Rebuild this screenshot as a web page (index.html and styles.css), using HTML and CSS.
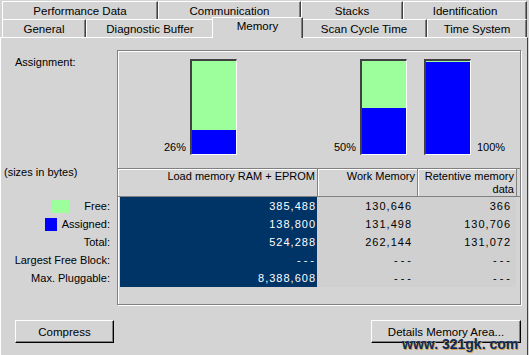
FILE: index.html
```html
<!DOCTYPE html>
<html>
<head>
    <title>Module Information - Memory</title>
    <link rel="stylesheet" href="styles.css">
</head>
<body>
    <div class="window">
        <!-- Tab strip, back row first -->
        <div class="tabs">
            <div class="tab-row row-back">
                <div class="tab">Performance Data</div>
                <div class="tab">Communication</div>
                <div class="tab">Stacks</div>
                <div class="tab">Identification</div>
            </div>
            <div class="tab-row row-front">
                <div class="tab">General</div>
                <div class="tab">Diagnostic Buffer</div>
                <div class="tab active">Memory</div>
                <div class="tab">Scan Cycle Time</div>
                <div class="tab">Time System</div>
            </div>
        </div>

        <div class="panel">
            <div class="main">
                <div class="side">
                    <div class="assign">Assignment:</div>
                    <div class="sizes">(sizes in bytes)</div>
                    <div class="row-label"><span class="swatch swatch-free"></span>Free:</div>
                    <div class="row-label"><span class="swatch swatch-used"></span>Assigned:</div>
                    <div class="row-label">Total:</div>
                    <div class="row-label">Largest Free Block:</div>
                    <div class="row-label">Max. Pluggable:</div>
                </div>

                <div class="box">
                    <div class="chart">
                        <div class="gauge gauge-load">
                            <span class="pct">26%</span>
                            <div class="bar"><div class="bar-free"></div><div class="bar-used" style="height: 26%"></div></div>
                        </div>
                        <div class="gauge gauge-work">
                            <span class="pct">50%</span>
                            <div class="bar"><div class="bar-free"></div><div class="bar-used" style="height: 50%"></div></div>
                        </div>
                        <div class="gauge gauge-ret">
                            <div class="bar"><div class="bar-free"></div><div class="bar-used" style="height: 99%"></div></div>
                            <span class="pct pct-after">100%</span>
                        </div>
                    </div>

                    <div class="thead">
                        <div class="th">Load memory RAM + EPROM</div>
                        <div class="th">Work Memory</div>
                        <div class="th">Retentive memory<br>data</div>
                    </div>

                    <div class="tbody">
                        <div class="td sel">385,488</div><div class="td">130,646</div><div class="td">366</div>
                        <div class="td sel">138,800</div><div class="td">131,498</div><div class="td">130,706</div>
                        <div class="td sel">524,288</div><div class="td">262,144</div><div class="td">131,072</div>
                        <div class="td sel dash">---</div><div class="td dash">---</div><div class="td dash">---</div>
                        <div class="td sel">8,388,608</div><div class="td dash">---</div><div class="td dash">---</div>
                    </div>
                </div>
            </div>

            <div class="actions">
                <button class="btn btn-compress">Compress</button>
                <button class="btn btn-details">Details Memory Area...</button>
            </div>
        </div>

        <div class="watermark">www. 321gk. com</div>
    </div>
</body>
</html>
```

FILE: styles.css
```css
body { margin: 0; background: #d4d4d4; font-family: "Liberation Sans", Arial, sans-serif; font-size: 11px; color: #000; }
.window { position: relative; width: 529px; height: 355px; overflow: hidden; }

/* tabs */
.tabs { padding: 1px 0 0 2px; }
.tab-row { display: grid; height: 18px; }
.row-back { grid-template-columns: 156px 143px 102px 124px; }
.row-front { grid-template-columns: 84px 128px 87px 126px 100px; }
.tab { box-sizing: border-box; height: 18px; padding-top: 2px; line-height: 15px; font-size: 11.5px; text-align: center; border-top: 1px solid #fff; border-left: 1px solid #fff; border-right: 1px solid #404040; box-shadow: inset -1px 0 0 #808080; white-space: nowrap; }
.tab.active { position: relative; height: 21px; margin-top: -2px; padding-top: 1px; margin-left: -2px; margin-right: -2px; background: #d4d4d4; z-index: 1; }

/* panel */
.panel { box-sizing: border-box; width: 528px; height: 318px; border-top: 1px solid #fff; border-left: 1px solid #fff; border-right: 1px solid #404040; padding-top: 12px; }
.main { display: flex; }
.side { width: 116px; display: flex; flex-direction: column; }
.assign { height: 110px; padding: 6px 0 0 14px; }
.sizes { height: 31px; padding-left: 3px; line-height: 13px; }
.row-label { height: 18px; line-height: 18px; display: flex; justify-content: flex-end; align-items: center; padding-right: 7px; white-space: nowrap; }
.swatch { display: inline-block; height: 13px; }
.swatch-free { width: 17px; background: #9cff9c; margin-right: 15px; }
.swatch-used { width: 12px; background: #0000ff; margin-right: 5px; }

.box { box-sizing: border-box; width: 404px; height: 255px; border: 1px solid #808080; box-shadow: inset 1px 1px 0 #fff, 1px 1px 0 #fff; }

/* bar chart */
.chart { box-sizing: border-box; height: 117px; display: flex; align-items: flex-end; padding-bottom: 13px; }
.gauge { display: flex; align-items: flex-end; gap: 4px; }
.gauge-load { margin-left: 44px; }
.gauge-work { margin-left: 95px; }
.gauge-ret { margin-left: 17px; gap: 6px; }
.pct { width: 24px; text-align: right; line-height: 13px; margin-bottom: 1px; }
.pct-after { text-align: left; }
.bar { box-sizing: border-box; width: 47px; height: 96px; display: flex; flex-direction: column; border-top: 2px solid #404040; border-left: 2px solid #404040; border-right: 1px solid #fff; border-bottom: 1px solid #fff; }
.bar-free { flex: 1; background: #9cff9c; }
.bar-used { background: #0000ff; }

/* table */
.thead { box-sizing: border-box; height: 29px; display: grid; grid-template-columns: 200px 100px 99px; border-top: 1px solid #808080; border-bottom: 1px solid #808080; }
.th { text-align: right; padding: 1px 2px 0 2px; line-height: 13px; border-right: 1px solid #808080; box-shadow: inset 1px 1px 0 #fff; white-space: nowrap; }
.tbody { display: grid; grid-template-columns: 197px 100px 99px; grid-auto-rows: 18px; padding-left: 2px; }
.td { text-align: right; line-height: 18px; padding-right: 5px; letter-spacing: 1px; background: #d0d0d0; }
.td.sel { background: #003366; color: #fff; padding-right: 1px; }
.td.dash { letter-spacing: 3px; padding-right: 3px; }
.td.sel.dash { padding-right: 0; }

/* buttons */
.actions { display: flex; justify-content: space-between; padding: 15px 6px 0 14px; }
.btn { box-sizing: border-box; height: 23px; font-family: inherit; font-size: 11.5px; background: #d4d4d4; border: 1px solid; border-color: #fff #000 #000 #fff; box-shadow: inset -1px -1px 0 #808080; padding: 0; }
.btn-compress { width: 99px; }
.btn-details { width: 150px; }

.watermark { position: absolute; left: 402px; top: 336px; font-size: 14px; font-weight: bold; color: #0d2a5e; text-shadow: 1px 1px 0 #d2a04a; white-space: nowrap; }
```
